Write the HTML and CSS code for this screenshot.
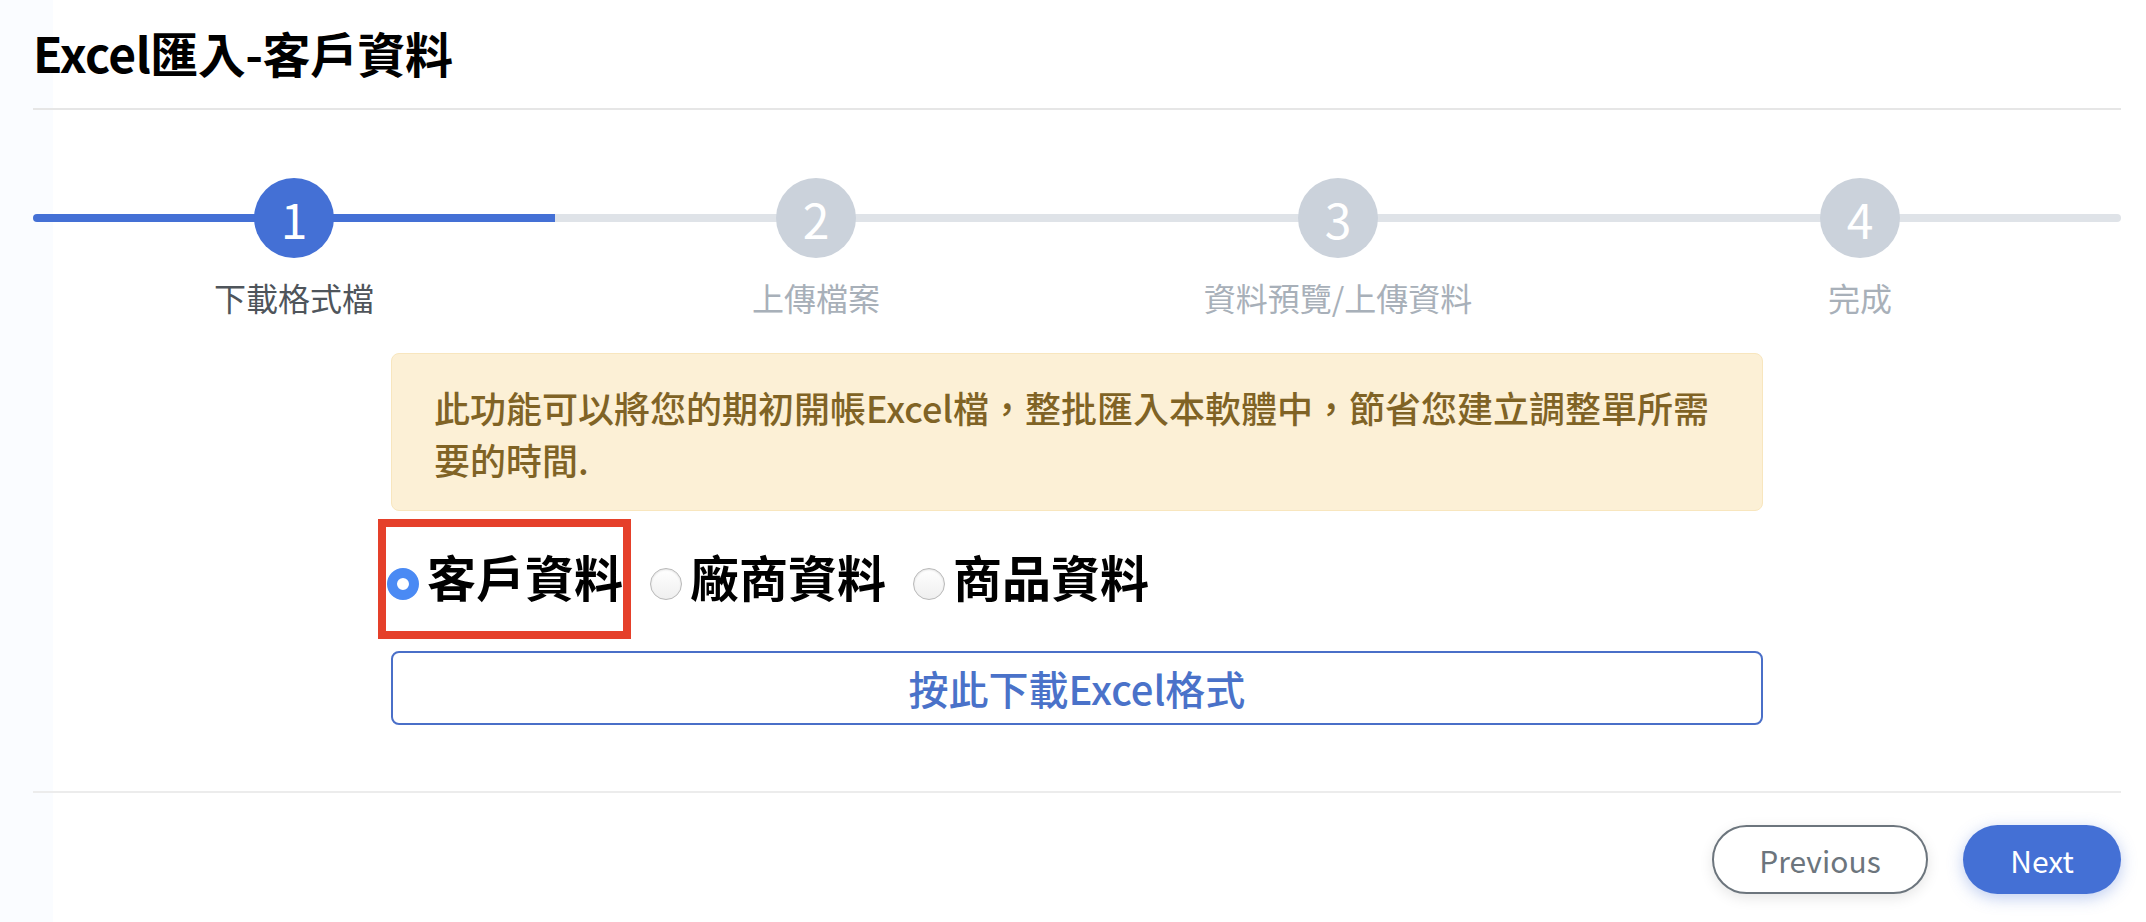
FILE: index.html
```html
<!DOCTYPE html>
<html lang="zh-Hant">
<head>
<meta charset="utf-8">
<title>Excel匯入-客戶資料</title>
<link rel="stylesheet" href="styles.css">
</head>
<body>
<div class="page">
  <h1 class="title">Excel匯入-客戶資料</h1>
  <hr class="rule rule-top">

  <ol class="stepper">
    <li class="step done"><span class="dot">1</span><span class="label">下載格式檔</span></li>
    <li class="step"><span class="dot">2</span><span class="label">上傳檔案</span></li>
    <li class="step"><span class="dot">3</span><span class="label">資料預覽/上傳資料</span></li>
    <li class="step last"><span class="dot">4</span><span class="label">完成</span></li>
  </ol>

  <div class="content">
    <div class="alert">此功能可以將您的期初開帳Excel檔，整批匯入本軟體中，節省您建立調整單所需要的時間.</div>

    <div class="radios">
      <label class="option marked"><input type="radio" name="kind" checked><span>客戶資料</span></label>
      <label class="option"><input type="radio" name="kind"><span>廠商資料</span></label>
      <label class="option"><input type="radio" name="kind"><span>商品資料</span></label>
    </div>

    <button class="download" type="button">按此下載Excel格式</button>
  </div>

  <hr class="rule rule-bottom">

  <div class="actions">
    <button class="btn btn-prev" type="button">Previous</button>
    <button class="btn btn-next" type="button">Next</button>
  </div>
</div>
</body>
</html>
```

FILE: styles.css
```css
*, *::before, *::after { box-sizing: border-box; }

html, body {
  margin: 0;
  height: 100%;
}

body {
  font-family: "Noto Sans CJK TC", "Noto Sans", sans-serif;
  background: linear-gradient(to right, #fafcff 0, #fafcff 53px, #ffffff 53px);
  color: #000;
}

.page {
  padding: 19px 25px 0 33px;
}

.title {
  margin: 0;
  font-size: 48px;
  line-height: 67px;
  font-weight: 700;
  color: #000;
  letter-spacing: -0.5px;
}

.rule {
  border: 0;
  height: 2px;
  margin: 0;
}

.rule-top {
  margin-top: 22px;
  background: #e6e6e6;
}

.rule-bottom {
  margin-top: 66px;
  background: #ececec;
}

/* Stepper */
.stepper {
  list-style: none;
  margin: 68px 0 0;
  padding: 0;
  display: grid;
  grid-template-columns: repeat(4, 1fr);
}

.step {
  position: relative;
  display: flex;
  flex-direction: column;
  align-items: center;
}

.step::before {
  content: "";
  position: absolute;
  left: 0;
  right: 0;
  top: 36px;
  height: 8px;
  background: #dfe3e8;
}

.step.done::before {
  background: #4470d5;
  border-radius: 4px 0 0 4px;
}

.step.last::before {
  border-radius: 0 4px 4px 0;
}

.dot {
  position: relative;
  width: 80px;
  height: 80px;
  border-radius: 50%;
  background: #cbd2db;
  color: #fff;
  font-size: 48px;
  line-height: 80px;
  text-align: center;
  font-weight: 400;
}

.step.done .dot {
  background: #4470d5;
}

.label {
  margin-top: 17px;
  font-size: 32px;
  line-height: 44px;
  color: #a8b0b9;
}

.step.done .label {
  color: #4f555b;
}

/* Content */
.content {
  width: 1372px;
  margin: 34px auto 0;
}

.alert {
  background: #fcf0d6;
  border: 1px solid #f8e6be;
  border-radius: 8px;
  padding: 27px 42px 25px;
  font-size: 36px;
  line-height: 52px;
  font-weight: 500;
  color: #806325;
}

.radios {
  display: flex;
  align-items: center;
  gap: 27px;
  margin: 31px 0 0 -4px;
}

.option {
  position: relative;
  display: flex;
  align-items: center;
  gap: 8px;
  font-size: 49px;
  line-height: 67px;
  font-weight: 700;
  color: #000;
}

.option input {
  appearance: none;
  -webkit-appearance: none;
  margin: 16px 0 0;
  width: 32px;
  height: 32px;
  border-radius: 50%;
  border: 1.5px solid #b9b9b9;
  background: linear-gradient(#ffffff, #efefef);
  box-shadow: inset 0 1px 2px rgba(0, 0, 0, 0.12);
  flex: none;
}

.option input:checked {
  border: 10px solid #4a8af4;
  background: #fff;
  box-shadow: none;
}

.option.marked::after {
  content: "";
  position: absolute;
  left: -9px;
  top: -23px;
  width: 253px;
  height: 120px;
  border: 8px solid #e5402a;
  pointer-events: none;
}

.download {
  display: block;
  width: 100%;
  height: 74px;
  margin-top: 42px;
  background: #fff;
  border: 2px solid #4a6fc8;
  border-radius: 8px;
  font-family: inherit;
  font-size: 40px;
  font-weight: 500;
  color: #4a72c9;
  cursor: pointer;
}

/* Footer actions */
.actions {
  display: flex;
  justify-content: flex-end;
  gap: 35px;
  margin-top: 32px;
}

.btn {
  height: 69px;
  border-radius: 35px;
  font-family: inherit;
  font-size: 30px;
  font-weight: 400;
  cursor: pointer;
}

.btn-prev {
  width: 216px;
  background: #fff;
  border: 2px solid #6c757d;
  color: #6c757d;
  box-shadow: 0 4px 14px rgba(0, 0, 0, 0.1);
}

.btn-next {
  width: 158px;
  background: #4470d5;
  border: 0;
  color: #fff;
  box-shadow: 0 4px 16px rgba(68, 112, 213, 0.35);
}
```
